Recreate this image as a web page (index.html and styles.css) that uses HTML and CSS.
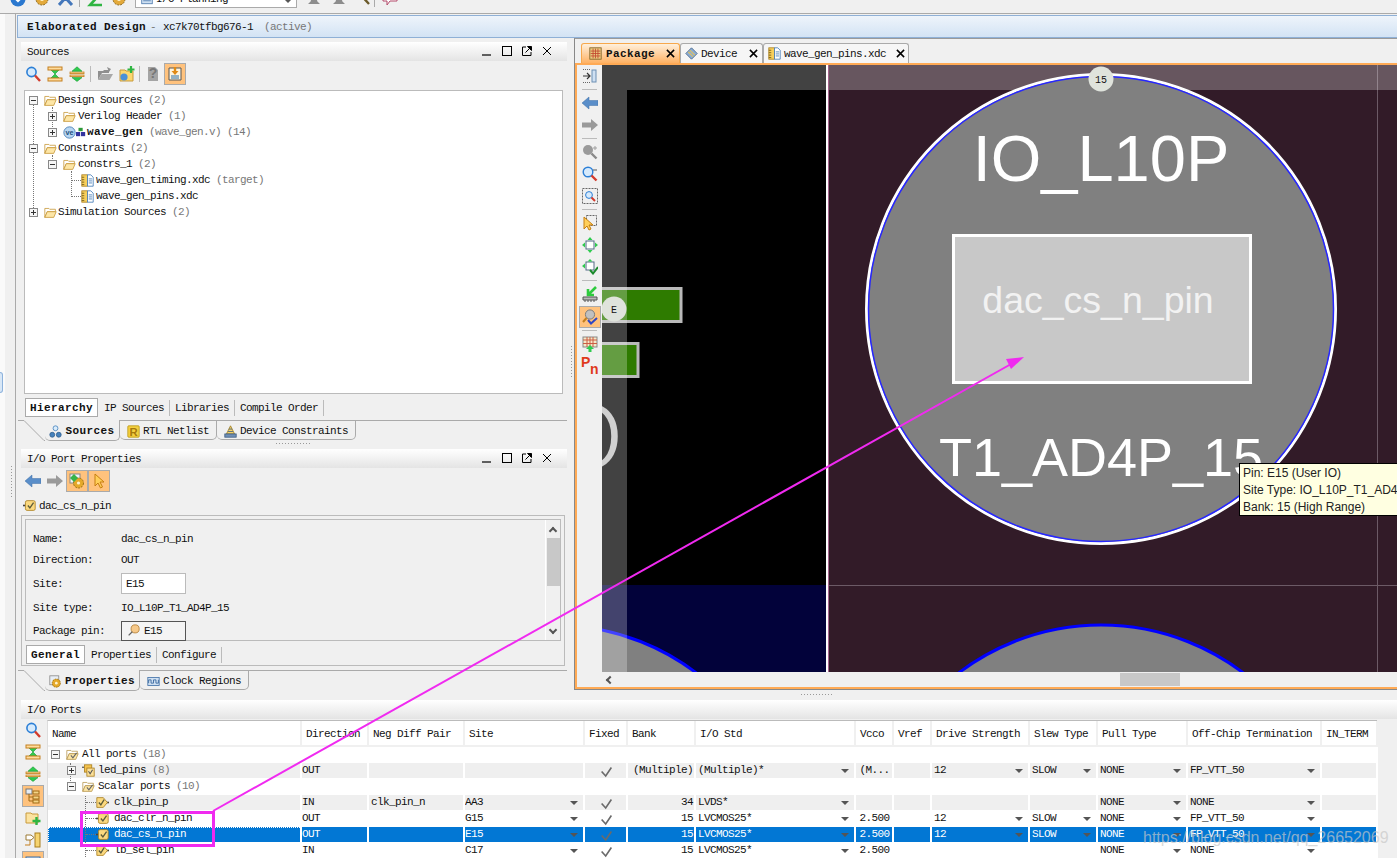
FILE: index.html
```html
<!DOCTYPE html>
<html lang="en">
<head>
    <meta charset="UTF-8">
    <title>Elaborated Design - I/O Planning</title>
    <link rel="stylesheet" href="styles.css">
</head>
<body>
<svg class="sprite" aria-hidden="true">
    <symbol id="i-search" viewBox="0 0 16 16"><circle cx="6.5" cy="6" r="4.6" fill="#d6eafc" stroke="#2c7fd6" stroke-width="1.6"/><path d="M10 9.5l5 5.5" stroke="#d23a2c" stroke-width="2.4"/></symbol>
    <symbol id="i-collapse" viewBox="0 0 16 16"><path d="M4 4h8L8 8zM4 12h8L8 8z" fill="#2fcb4f" stroke="#159a30" stroke-width=".6"/><rect x="1" y="1" width="14" height="3" fill="#ffdc9c" stroke="#c47f1e"/><rect x="1" y="12" width="14" height="3" fill="#ffdc9c" stroke="#c47f1e"/></symbol>
    <symbol id="i-expand" viewBox="0 0 16 16"><rect x="1" y="6" width="14" height="1.6" fill="#ffdc9c" stroke="#c47f1e" stroke-width=".8"/><rect x="1" y="9" width="14" height="1.6" fill="#ffdc9c" stroke="#c47f1e" stroke-width=".8"/><path d="M8 .8l5 4.400H3zM8 15.400l5-3.800H3z" fill="#2fcb4f" stroke="#159a30" stroke-width=".6"/></symbol>
    <symbol id="i-folder-gray" viewBox="0 0 16 16"><path d="M1 5h5l1-1h5v3H5L1 14z" fill="#8f8f8f"/><path d="M1 14l3.500-6H16l-3.500 6z" fill="#a8a8a8"/><path d="M10 1l4 2-2 3z" fill="#8f8f8f"/></symbol>
    <symbol id="i-folder-add" viewBox="0 0 16 16"><path d="M1 4h5l1 1h7v10H1z" fill="#fbd76f" stroke="#c89a3c"/><circle cx="5" cy="11" r="3.600" fill="#4a90d8"/><path d="M12 0v7M8.500 3.500h7" stroke="#2fb542" stroke-width="2.200"/></symbol>
    <symbol id="i-folder-plus" viewBox="0 0 16 16"><path d="M1 3h5l1 1h6v9H1z" fill="#fce3a0" stroke="#c89a3c"/><path d="M11.500 7v8M7.500 11h8" stroke="#2fb542" stroke-width="2.400"/></symbol>
    <symbol id="i-scope" viewBox="0 0 16 16"><path d="M2 2h12v12H2z" fill="#fff4dc" stroke="#565656"/><path d="M4 10h8M4 12h8" stroke="#2a6fa8"/><path d="M8 1v6" stroke="#e08a14" stroke-width="2.400"/><path d="M4.500 5L8 9l3.500-4z" fill="#e08a14"/></symbol>
    <symbol id="i-folder" viewBox="0 0 16 16"><path d="M1 3h5l1 1h7v3H4L1 14z" fill="#fff" stroke="#c89a3c"/><path d="M1 14l3-7h11l-3 7z" fill="#fde6a6" stroke="#c89a3c"/></symbol>
    <symbol id="i-folder-check" viewBox="0 0 16 16"><path d="M1 3h5l1 1h7v3H4L1 14z" fill="#fff" stroke="#b99a55"/><path d="M1 14l3-7h11l-3 7z" fill="#fde6a6" stroke="#b99a55"/><path d="M6 9l2.500 3L13 6" fill="none" stroke="#666" stroke-width="1.400"/></symbol>
    <symbol id="i-bus" viewBox="0 0 16 16"><path d="M0 4h3" stroke="#555" stroke-width="1.500"/><rect x="3" y="1" width="9" height="9" fill="#f5c34e" stroke="#a97e1e"/><rect x="6" y="5" width="9" height="10" fill="#fbe09a" stroke="#a97e1e"/><path d="M8 9l2 3 3-5" fill="none" stroke="#555" stroke-width="1.300"/></symbol>
    <symbol id="i-chip" viewBox="0 0 12 12"><rect x="3" y="1" width="5" height="4" fill="#2e9a3a"/><rect x="0" y="6" width="5" height="5" fill="#33339f"/><rect x="6" y="6" width="5" height="5" fill="#33339f"/></symbol>
    <symbol id="i-file" viewBox="0 0 16 16"><rect x="1" y="1" width="7" height="14" fill="#f7cf5c" stroke="#a97e1e"/><path d="M1 4h3M1 7h3M1 10h3M1 13h3" stroke="#6d5413"/><path d="M8 1h4l3 3v11H8z" fill="#fff" stroke="#3f78b5"/><path d="M9.500 6h4M9.500 8.500h4M9.500 11h4" stroke="#3f78b5"/></symbol>
    <symbol id="i-back" viewBox="0 0 16 16"><path d="M0 8l7-6v3.500h9v5H7V14z" fill="#5a8ec9" stroke="#3f6fa6" stroke-width=".5"/></symbol>
    <symbol id="i-forward" viewBox="0 0 16 16"><path d="M16 8L9 2v3.500H0v5h9V14z" fill="#9a9a9a"/></symbol>
    <symbol id="i-gear-tile" viewBox="0 0 16 16"><rect x="1" y="1" width="10" height="9" fill="#eef4fb" stroke="#888"/><circle cx="9.500" cy="10" r="5" fill="#e5a92a" stroke="#9b6f10" stroke-dasharray="2 1"/><circle cx="9.500" cy="10" r="1.600" fill="#fff3cf"/><path d="M1 5l4-4 4 4-4 4z" fill="#37b34a"/></symbol>
    <symbol id="i-cursor" viewBox="0 0 16 16"><path d="M4 1v12l3-3 2.500 5 2-1-2.500-5h4z" fill="#ffcf5a" stroke="#c77e10"/></symbol>
    <symbol id="i-port" viewBox="0 0 16 16"><path d="M0 8h3" stroke="#444" stroke-width="2"/><rect x="3" y="2" width="12" height="12" rx="2" fill="#fbd97f" stroke="#a97e1e"/><path d="M6 8l2.500 3L13 4.500" fill="none" stroke="#5b5b3a" stroke-width="1.600"/></symbol>
    <symbol id="i-port-out" viewBox="0 0 16 16"><path d="M13 8h3" stroke="#444" stroke-width="2"/><path d="M1 2h8l5 6-5 6H1z" fill="#fbd97f" stroke="#a97e1e"/><path d="M3.500 8l2.500 3 4-6.500" fill="none" stroke="#5b5b3a" stroke-width="1.600"/></symbol>
    <symbol id="i-pin" viewBox="0 0 16 16"><circle cx="10" cy="6" r="5" fill="#f6c98a" stroke="#b07d34"/><path d="M6.500 9.500L2 14" stroke="#666" stroke-width="1.600"/></symbol>
    <symbol id="i-device-c" viewBox="0 0 16 16"><path d="M8 1l5 10H3z" fill="#f6d46b" stroke="#9b7a1c"/><rect x="1" y="11" width="14" height="4" fill="#6f8fb5" stroke="#3d5c82"/><path d="M5 8h6M6 5h4" stroke="#3d5c82"/></symbol>
    <symbol id="i-sources" viewBox="0 0 16 16"><circle cx="8" cy="4" r="3" fill="#d9ecfb" stroke="#4682bd"/><circle cx="4" cy="12" r="3" fill="#4682bd" stroke="#2c5d8d"/><circle cx="12" cy="12" r="3" fill="#4682bd" stroke="#2c5d8d"/></symbol>
    <symbol id="i-gear" viewBox="0 0 16 16"><rect x="1" y="1" width="11" height="11" fill="#e8eef5" stroke="#888"/><circle cx="9" cy="10" r="5" fill="#e5a92a" stroke="#9b6f10" stroke-dasharray="2 1"/><circle cx="9" cy="10" r="1.600" fill="#fff3cf"/></symbol>
    <symbol id="i-clock" viewBox="0 0 16 16"><rect x="1" y="3" width="14" height="10" fill="#cfe0f2" stroke="#3f6fa6"/><path d="M2 10V6h3v4h3V6h3v4h3V6" fill="none" stroke="#2d5f99"/></symbol>
    <symbol id="i-package" viewBox="0 0 16 16"><rect x="1" y="1" width="14" height="14" fill="#e9c97f" stroke="#7c5f24"/><path d="M2 5h12M2 8h12M2 11h12M5 2v12M8 2v12M11 2v12" stroke="#c2452d"/></symbol>
    <symbol id="i-device" viewBox="0 0 16 16"><path d="M1 8l7-7 7 7-7 7z" fill="#8eadd1" stroke="#3e5f89"/><path d="M4 6l6 6M6 4l6 6" stroke="#e9c455" stroke-width="1.300"/></symbol>
    <symbol id="i-dock" viewBox="0 0 16 16"><path d="M1 8h7M5 5l3 3-3 3" fill="none" stroke="#333" stroke-width="1.200"/><rect x="10" y="2" width="4" height="12" fill="#cfe0f2" stroke="#6d8fb3"/><path d="M1 1.500h8M1 14.500h8" stroke="#666" stroke-dasharray="1 1"/></symbol>
    <symbol id="i-zoom-in" viewBox="0 0 16 16"><circle cx="6" cy="6" r="5" fill="#9a9a9a"/><path d="M9.500 9.500l5 5" stroke="#8a8a8a" stroke-width="2.400"/><path d="M11 4h4M13 2v4" stroke="#a0a0a0"/></symbol>
    <symbol id="i-zoom-out" viewBox="0 0 16 16"><circle cx="6" cy="6" r="4.800" fill="#d6eafc" stroke="#2c7fd6" stroke-width="1.400"/><path d="M9.500 9.500l5 5" stroke="#d23a2c" stroke-width="2.400"/><path d="M11 4h4" stroke="#555"/></symbol>
    <symbol id="i-zoom-fit" viewBox="0 0 16 16"><rect x=".5" y=".5" width="15" height="15" fill="none" stroke="#666" stroke-dasharray="2 1"/><circle cx="7" cy="7" r="3.400" fill="#d6eafc" stroke="#2c7fd6"/><path d="M9.500 9.500l3.500 3.500" stroke="#d23a2c" stroke-width="2"/></symbol>
    <symbol id="i-select" viewBox="0 0 16 16"><rect x="4.500" y=".5" width="10" height="10" fill="none" stroke="#666" stroke-dasharray="2 1"/><path d="M2 2v12l3-3 2 4 2-1-2-4h4z" fill="#ffcf5a" stroke="#c77e10"/></symbol>
    <symbol id="i-autofit" viewBox="0 0 16 16"><rect x="4" y="4" width="8" height="8" fill="#fff" stroke="#536a85"/><path d="M8 0l2.500 3h-5zM8 16l2.500-3h-5zM0 8l3-2.500v5zM16 8l-3-2.500v5z" fill="#2fcb4f"/></symbol>
    <symbol id="i-autofit-check" viewBox="0 0 16 16"><rect x="4" y="3" width="8" height="8" fill="#fff" stroke="#536a85"/><path d="M8 0l2.500 2.500h-5zM0 7l3-2.500v5z" fill="#2fcb4f"/><path d="M8 11l3 3.500L16 8" fill="none" stroke="#1b8a2c" stroke-width="2"/></symbol>
    <symbol id="i-place" viewBox="0 0 16 16"><path d="M14 1L7 8M6 3v6h6" fill="none" stroke="#2ecb3e" stroke-width="2.600"/><path d="M1 11h14v3H1z" fill="#b9b9b9" stroke="#555"/><path d="M3 14v2M6 14v2M9 14v2M12 14v2" stroke="#555"/></symbol>
    <symbol id="i-pin-check" viewBox="0 0 16 16"><circle cx="8" cy="5.500" r="4.600" fill="#c0c0c0" stroke="#7d7d7d"/><path d="M4.500 9L1 13" stroke="#c47f1e" stroke-width="2"/><path d="M6 11l3 3.500L15 9" fill="none" stroke="#2f47c4" stroke-width="2"/></symbol>
    <symbol id="i-grid" viewBox="0 0 16 16"><rect x="1" y="1" width="14" height="10" fill="#f4e8c8" stroke="#888"/><path d="M1 4h14M1 7.500h14M5 1v10M8 1v10M11 1v10" stroke="#cc5d45"/><path d="M8 9l4 4h-2.500v3h-3v-3H4z" fill="#2fcb4f"/></symbol>
    <symbol id="i-hier" viewBox="0 0 16 16"><rect x="1" y="1" width="6" height="5" fill="#e6ecf3" stroke="#777"/><path d="M4 6v7h4M4 9h4" fill="none" stroke="#a06a14"/><rect x="8" y="3" width="6" height="3" fill="#f4d487" stroke="#a06a14"/><rect x="8" y="8" width="6" height="3" fill="#f4d487" stroke="#a06a14"/><rect x="8" y="12" width="6" height="3" fill="#f4d487" stroke="#a06a14"/></symbol>
    <symbol id="i-sched" viewBox="0 0 16 16"><rect x="10" y="1" width="5" height="14" fill="#f6d470" stroke="#a97e1e"/><path d="M0 13h5V3" fill="none" stroke="#c47f1e"/><path d="M1 3h5l3 2.500L6 8H1z" fill="#fff" stroke="#9c7a35"/></symbol>
    <symbol id="i-check" viewBox="0 0 16 16"><path d="M2 8l5 5.500L14 3" fill="none" stroke="#6a6a6a" stroke-width="2"/></symbol>
    <symbol id="i-min" viewBox="0 0 10 10"><path d="M0 9h9" stroke="#000" stroke-width="1.200"/></symbol>
    <symbol id="i-max" viewBox="0 0 10 10"><rect x=".5" y=".5" width="9" height="9" fill="none" stroke="#000"/></symbol>
    <symbol id="i-float" viewBox="0 0 10 10"><path d="M4 1H.5v8.500H9V6" fill="none" stroke="#000"/><path d="M3.500 6.500L9 1M5.500 .5h4v4z" stroke="#000"/></symbol>
    <symbol id="i-close" viewBox="0 0 10 10"><path d="M1 1l8 8M9 1l-8 8" stroke="#000"/></symbol>
    <symbol id="i-close-b" viewBox="0 0 10 10"><path d="M1 1l8 8M9 1l-8 8" stroke="#000" stroke-width="1.700"/></symbol>
    <symbol id="i-blue-ball" viewBox="0 0 16 16"><circle cx="8" cy="8" r="7.500" fill="#2b78cf"/><path d="M4 6l4 4 4-4" fill="none" stroke="#fff" stroke-width="2.200"/></symbol>
    <symbol id="i-gear-top" viewBox="0 0 16 16"><circle cx="8" cy="8" r="6" fill="#e3a93a" stroke="#8f6a1c" stroke-dasharray="2 1"/><circle cx="8" cy="8" r="2" fill="#fff2c8"/></symbol>
    <symbol id="i-tools" viewBox="0 0 16 16"><path d="M1 14L10 4M14 14L4 3" stroke="#4477bb" stroke-width="3"/><circle cx="12" cy="4" r="3" fill="#e3a93a"/></symbol>
    <symbol id="i-z" viewBox="0 0 16 16"><path d="M2 2h12L3 14h12" fill="none" stroke="#2fb542" stroke-width="2.600"/></symbol>
    <symbol id="i-pin-top" viewBox="0 0 16 16"><path d="M3 2h10l-2 8 3 3H2l3-3z" fill="#8d8d8d"/></symbol>
    <symbol id="i-hammer" viewBox="0 0 16 16"><path d="M3 2l10 11" stroke="#6b5a2a" stroke-width="2.400"/><path d="M1 5l5-4 3 2-5 4z" fill="#e6a52b"/></symbol>
    <symbol id="i-bubble" viewBox="0 0 16 16"><path d="M1 2h14v8H8l-3 4v-4H1z" fill="#fff" stroke="#b34a6a"/><circle cx="8" cy="6" r="2" fill="#d84040"/></symbol>
    <symbol id="i-doc" viewBox="0 0 16 16"><rect x="1" y="3" width="14" height="10" fill="#cfe0f2" stroke="#3f6fa6"/><path d="M3 6h10M3 9h10" stroke="#3f6fa6"/></symbol>
</svg>

<div class="app">
    <div class="top-toolbar">
        <svg class="top-icon"><use href="#i-blue-ball"/></svg>
        <svg class="top-icon"><use href="#i-gear-top"/></svg>
        <svg class="top-icon"><use href="#i-tools"/></svg>
        <span class="top-sep"></span>
        <svg class="top-icon"><use href="#i-z"/></svg>
        <svg class="top-icon"><use href="#i-gear-top"/></svg>
        <div class="layout-select">
            <svg class="top-icon-small"><use href="#i-doc"/></svg>
            <span>I/O Planning</span>
            <i class="caret"></i>
        </div>
        <svg class="top-icon gap-big"><use href="#i-pin-top"/></svg>
        <svg class="top-icon after-big"><use href="#i-pin-top"/></svg>
        <svg class="top-icon tight"><use href="#i-hammer"/></svg>
        <span class="top-sep"></span>
        <svg class="top-icon"><use href="#i-bubble"/></svg>
    </div>

    <div class="body-row">
        <div class="rail"><span class="rail-btn"></span><span class="rail-grip"></span></div>

        <div class="main">
            <div class="design-bar">
                <b class="bold">Elaborated Design</b>
                <span class="muted dash">-</span>
                <span>xc7k70tfbg676-1</span>
                <span class="muted active-tag">(active)</span>
            </div>

            <div class="panes">
                <div class="left-col">
                    <div class="panel-head">
                        <span>Sources</span>
                        <div class="win-btns">
                            <svg><use href="#i-min"/></svg><svg><use href="#i-max"/></svg><svg><use href="#i-float"/></svg><svg><use href="#i-close"/></svg>
                        </div>
                    </div>
                    <div class="toolbar sources-tools">
                        <span class="tool"><svg><use href="#i-search"/></svg></span>
                        <span class="tool"><svg><use href="#i-collapse"/></svg></span>
                        <span class="tool"><svg><use href="#i-expand"/></svg></span>
                        <span class="tool-sep"></span>
                        <span class="tool"><svg><use href="#i-folder-gray"/></svg></span>
                        <span class="tool"><svg><use href="#i-folder-add"/></svg></span>
                        <span class="tool-sep narrow"></span>
                        <span class="tool">
                            <svg viewBox="0 0 16 16"><path d="M3 1h7l3 3v11H3z" fill="#a4a4a4"/><text x="8" y="12" class="svg-glyph" fill="#777">?</text></svg>
                        </span>
                        <span class="tool on"><svg><use href="#i-scope"/></svg></span>
                    </div>

                    <div class="tree-box">
                        <span class="guide g-root"></span>
                        <span class="guide g-design"></span>
                        <span class="guide g-constr"></span>
                        <span class="guide g-files"></span>
                        <div class="t-row lv0"><i class="exp minus"></i><svg class="ico"><use href="#i-folder"/></svg><span>Design Sources</span><span class="muted">(2)</span></div>
                        <div class="t-row lv1"><i class="exp plus"></i><svg class="ico"><use href="#i-folder"/></svg><span>Verilog Header</span><span class="muted">(1)</span></div>
                        <div class="t-row lv1">
                            <i class="exp plus"></i>
                            <svg class="ico ve" viewBox="0 0 16 16"><circle cx="8" cy="8" r="7" fill="#b7d6f2" stroke="#3e78b2"/><text x="8" y="11" class="svg-glyph svg-small" fill="#23527f">ve</text></svg>
                            <svg class="ico-chip"><use href="#i-chip"/></svg>
                            <b class="bold">wave_gen</b><span class="muted">(wave_gen.v)</span><span class="muted">(14)</span>
                        </div>
                        <div class="t-row lv0"><i class="exp minus"></i><svg class="ico"><use href="#i-folder"/></svg><span>Constraints</span><span class="muted">(2)</span></div>
                        <div class="t-row lv1"><i class="exp minus"></i><svg class="ico"><use href="#i-folder"/></svg><span>constrs_1</span><span class="muted">(2)</span></div>
                        <div class="t-row lv2"><i class="leaf"></i><svg class="ico"><use href="#i-file"/></svg><span>wave_gen_timing.xdc</span><span class="muted">(target)</span></div>
                        <div class="t-row lv2"><i class="leaf"></i><svg class="ico"><use href="#i-file"/></svg><span>wave_gen_pins.xdc</span></div>
                        <div class="t-row lv0"><i class="exp plus"></i><svg class="ico"><use href="#i-folder"/></svg><span>Simulation Sources</span><span class="muted">(2)</span></div>
                    </div>

                    <div class="view-tabs hierarchy-tabs">
                        <span class="view-tab on">Hierarchy</span>
                        <span class="view-tab">IP Sources</span>
                        <span class="view-tab">Libraries</span>
                        <span class="view-tab">Compile Order</span>
                    </div>
                    <div class="dock-tabs">
                        <svg class="notch" viewBox="0 0 27 21"><path d="M0 .5h6L26 20.500h1" fill="none" stroke="#aaa"/></svg>
                        <span class="dock-tab on sources-tab"><svg><use href="#i-sources"/></svg><b class="bold">Sources</b></span>
                        <span class="dock-tab rtl-tab">
                            <svg viewBox="0 0 16 16"><rect x="1" y="1" width="14" height="14" rx="1" fill="#f4d03f" stroke="#b99716"/><text x="8" y="13" class="svg-glyph" fill="#a6790d">R</text></svg>
                            RTL Netlist
                        </span>
                        <span class="dock-tab constr-tab"><svg><use href="#i-device-c"/></svg>Device Constraints</span>
                        <span class="dock-rest"></span>
                    </div>
                    <div class="split-grip"></div>

                    <div class="panel-head">
                        <span>I/O Port Properties</span>
                        <div class="win-btns">
                            <svg><use href="#i-min"/></svg><svg><use href="#i-max"/></svg><svg><use href="#i-float"/></svg><svg><use href="#i-close"/></svg>
                        </div>
                    </div>
                    <div class="toolbar props-tools">
                        <span class="tool"><svg><use href="#i-back"/></svg></span>
                        <span class="tool"><svg><use href="#i-forward"/></svg></span>
                        <span class="tool on"><svg><use href="#i-gear-tile"/></svg></span>
                        <span class="tool on"><svg><use href="#i-cursor"/></svg></span>
                    </div>
                    <div class="port-title"><svg><use href="#i-port"/></svg><span>dac_cs_n_pin</span></div>

                    <div class="prop-outer">
                        <div class="prop-inner">
                            <div class="prop-grid">
                                <span>Name:</span><span>dac_cs_n_pin</span>
                                <span>Direction:</span><span>OUT</span>
                                <span>Site:</span><span class="prop-input">E15</span>
                                <span>Site type:</span><span>IO_L10P_T1_AD4P_15</span>
                                <span>Package pin:</span><span class="prop-button"><svg><use href="#i-pin"/></svg>E15</span>
                            </div>
                            <div class="vscroll">
                                <i class="chev up"></i>
                                <span class="vthumb"></span>
                                <i class="chev down"></i>
                            </div>
                        </div>
                        <div class="view-tabs general-tabs">
                            <span class="view-tab on">General</span>
                            <span class="view-tab">Properties</span>
                            <span class="view-tab">Configure</span>
                        </div>
                    </div>
                    <div class="dock-tabs bottom-dock">
                        <svg class="notch" viewBox="0 0 27 21"><path d="M0 .5h6L26 20.500h1" fill="none" stroke="#aaa"/></svg>
                        <span class="dock-tab on props-tab"><svg><use href="#i-gear"/></svg><b class="bold">Properties</b></span>
                        <span class="dock-tab clock-tab"><svg><use href="#i-clock"/></svg>Clock Regions</span>
                        <span class="dock-rest"></span>
                    </div>
                </div>

                <div class="splitter"><span class="splitter-dots"></span></div>

                <div class="right-col">
                    <div class="editor-tabs">
                        <span class="ed-tab on package-tab"><svg class="ed-icon"><use href="#i-package"/></svg><b class="bold">Package</b><svg class="ed-close"><use href="#i-close-b"/></svg></span>
                        <span class="ed-tab device-tab"><svg class="ed-icon"><use href="#i-device"/></svg><span>Device</span><svg class="ed-close"><use href="#i-close-b"/></svg></span>
                        <span class="ed-tab pins-tab"><svg class="ed-icon"><use href="#i-file"/></svg><span>wave_gen_pins.xdc</span><svg class="ed-close"><use href="#i-close-b"/></svg></span>
                    </div>
                    <div class="editor-frame">
                        <div class="strip">
                            <span class="strip-btn"><svg><use href="#i-dock"/></svg></span>
                            <span class="strip-sep"></span>
                            <span class="strip-btn"><svg><use href="#i-back"/></svg></span>
                            <span class="strip-btn"><svg><use href="#i-forward"/></svg></span>
                            <span class="strip-sep"></span>
                            <span class="strip-btn"><svg><use href="#i-zoom-in"/></svg></span>
                            <span class="strip-btn"><svg><use href="#i-zoom-out"/></svg></span>
                            <span class="strip-btn"><svg><use href="#i-zoom-fit"/></svg></span>
                            <span class="strip-sep"></span>
                            <span class="strip-btn"><svg><use href="#i-select"/></svg></span>
                            <span class="strip-btn"><svg><use href="#i-autofit"/></svg></span>
                            <span class="strip-btn"><svg><use href="#i-autofit-check"/></svg></span>
                            <span class="strip-sep"></span>
                            <span class="strip-btn"><svg><use href="#i-place"/></svg></span>
                            <span class="strip-btn on"><svg><use href="#i-pin-check"/></svg></span>
                            <span class="strip-sep"></span>
                            <span class="strip-btn"><svg><use href="#i-grid"/></svg></span>
                            <span class="strip-btn pn-btn">
                                <svg viewBox="0 0 20 22"><text x="1" y="12" class="svg-glyph svg-bold" fill="#df3a1c">P</text><text x="10" y="19" class="svg-glyph svg-bold" fill="#df3a1c">n</text></svg>
                            </span>
                        </div>
                        <div class="canvas-col">
                            <svg class="canvas" viewBox="602 65 795 607">
                                <rect x="602" y="65" width="226" height="607" fill="#000"/>
                                <rect x="602" y="585" width="226" height="87" fill="#02023a"/>
                                <rect x="828" y="65" width="569" height="607" fill="#321b28"/>
                                <path d="M828 585.500h569M1377.500 65v607" stroke="#6c5a66" fill="none"/>
                                <text x="624" y="471" class="pkg-o">O</text>
                                <rect x="596" y="288.500" width="85" height="33" class="pin-rect"/>
                                <rect x="596" y="343.500" width="42" height="33" class="pin-rect"/>
                                <circle cx="554" cy="860" r="235" class="pad-far"/>
                                <circle cx="1101" cy="860" r="235" class="pad-far"/>
                                <rect x="602" y="90" width="25" height="582" class="band"/>
                                <rect x="602" y="65" width="795" height="25" class="band"/>
                                <rect x="826" y="65" width="2" height="607" fill="#fff"/>
                                <rect x="828" y="65" width="1" height="607" fill="#a4648c"/>
                                <circle cx="1101" cy="309" r="234.500" class="pad-main"/>
                                <circle cx="1101" cy="309" r="232.500" class="pad-ring"/>
                                <text x="1101" y="181" class="pad-text big">IO_L10P</text>
                                <rect x="953.500" y="235.500" width="297" height="147" class="pad-box"/>
                                <text x="1098" y="313" class="pad-net">dac_cs_n_pin</text>
                                <text x="1101" y="476" class="pad-text mid">T1_AD4P_15</text>
                                <circle cx="1101" cy="79" r="12.500" class="badge"/>
                                <text x="1101" y="83" class="badge-text">15</text>
                                <circle cx="614" cy="309" r="12.500" class="badge"/>
                                <text x="614" y="313" class="badge-text">E</text>
                            </svg>
                            <div class="hscroll"><i class="chev left"></i><span class="hthumb"></span></div>
                        </div>
                    </div>
                </div>
            </div>

            <div class="grip"><span class="grip-dots"></span></div>

            <div class="io-ports">
                <div class="panel-head no-nudge">
                    <span>I/O Ports</span>
                </div>
                <div class="ports-body">
                    <div class="ports-tools">
                        <span class="tool"><svg><use href="#i-search"/></svg></span>
                        <span class="tool"><svg><use href="#i-collapse"/></svg></span>
                        <span class="tool"><svg><use href="#i-expand"/></svg></span>
                        <span class="tool on"><svg><use href="#i-hier"/></svg></span>
                        <span class="tool"><svg><use href="#i-folder-plus"/></svg></span>
                        <span class="tool"><svg><use href="#i-sched"/></svg></span>
                        <span class="tool on"><svg><use href="#i-doc"/></svg></span>
                    </div>
                    <div class="ports-table-wrap">
                        <span class="guide g-p1"></span>
                        <span class="guide g-p2"></span>
                        <table class="ports">
                            <colgroup>
                                <col class="c-name"><col class="c-dir"><col class="c-neg"><col class="c-site"><col class="c-fixed"><col class="c-bank"><col class="c-std"><col class="c-vcco"><col class="c-vref"><col class="c-drive"><col class="c-slew"><col class="c-pull"><col class="c-off"><col class="c-term">
                            </colgroup>
                            <thead>
                                <tr>
                                    <th>Name</th><th>Direction</th><th>Neg Diff Pair</th><th>Site</th><th>Fixed</th><th>Bank</th><th>I/O Std</th><th>Vcco</th><th>Vref</th><th>Drive Strength</th><th>Slew Type</th><th>Pull Type</th><th>Off-Chip Termination</th><th>IN_TERM</th>
                                </tr>
                            </thead>
                            <tbody>
                                <tr>
                                    <td class="tree-cell"><div class="t-row p0"><i class="exp minus"></i><svg class="ico"><use href="#i-folder-check"/></svg><span>All ports</span><span class="muted">(18)</span></div></td>
                                    <td></td><td></td><td></td><td></td><td></td><td></td><td></td><td></td><td></td><td></td><td></td><td></td><td></td>
                                </tr>
                                <tr class="alt">
                                    <td class="tree-cell"><div class="t-row p1"><i class="exp plus"></i><svg class="ico"><use href="#i-bus"/></svg><span>led_pins</span><span class="muted">(8)</span></div></td>
                                    <td>OUT</td><td></td><td></td>
                                    <td class="ctr"><svg class="check"><use href="#i-check"/></svg></td>
                                    <td class="num">(Multiple)</td>
                                    <td><div class="dd">(Multiple)*<i class="caret"></i></div></td>
                                    <td class="ctr">(M...</td><td></td>
                                    <td><div class="dd">12<i class="caret"></i></div></td>
                                    <td><div class="dd">SLOW<i class="caret"></i></div></td>
                                    <td><div class="dd">NONE<i class="caret"></i></div></td>
                                    <td><div class="dd">FP_VTT_50<i class="caret"></i></div></td>
                                    <td></td>
                                </tr>
                                <tr>
                                    <td class="tree-cell"><div class="t-row p1"><i class="exp minus"></i><svg class="ico"><use href="#i-folder-check"/></svg><span>Scalar ports</span><span class="muted">(10)</span></div></td>
                                    <td></td><td></td><td></td><td></td><td></td><td></td><td></td><td></td><td></td><td></td><td></td><td></td><td></td>
                                </tr>
                                <tr class="alt">
                                    <td class="tree-cell"><div class="t-row p2"><i class="leaf"></i><svg class="ico"><use href="#i-port-out"/></svg><span>clk_pin_p</span></div></td>
                                    <td>IN</td><td>clk_pin_n</td>
                                    <td><div class="dd">AA3<i class="caret"></i></div></td>
                                    <td class="ctr"><svg class="check"><use href="#i-check"/></svg></td>
                                    <td class="num">34</td>
                                    <td><div class="dd">LVDS*<i class="caret"></i></div></td>
                                    <td></td><td></td><td></td><td></td>
                                    <td><div class="dd">NONE<i class="caret"></i></div></td>
                                    <td><div class="dd">NONE<i class="caret"></i></div></td>
                                    <td></td>
                                </tr>
                                <tr>
                                    <td class="tree-cell"><div class="t-row p2"><i class="leaf"></i><svg class="ico"><use href="#i-port"/></svg><span>dac_clr_n_pin</span></div></td>
                                    <td>OUT</td><td></td>
                                    <td><div class="dd">G15<i class="caret"></i></div></td>
                                    <td class="ctr"><svg class="check"><use href="#i-check"/></svg></td>
                                    <td class="num">15</td>
                                    <td><div class="dd">LVCMOS25*<i class="caret"></i></div></td>
                                    <td class="ctr">2.500</td><td></td>
                                    <td><div class="dd">12<i class="caret"></i></div></td>
                                    <td><div class="dd">SLOW<i class="caret"></i></div></td>
                                    <td><div class="dd">NONE<i class="caret"></i></div></td>
                                    <td><div class="dd">FP_VTT_50<i class="caret"></i></div></td>
                                    <td></td>
                                </tr>
                                <tr class="sel">
                                    <td class="tree-cell"><div class="t-row p2"><i class="leaf"></i><svg class="ico"><use href="#i-port"/></svg><span>dac_cs_n_pin</span></div></td>
                                    <td>OUT</td><td></td>
                                    <td><div class="dd">E15<i class="caret"></i></div></td>
                                    <td class="ctr"><svg class="check"><use href="#i-check"/></svg></td>
                                    <td class="num">15</td>
                                    <td><div class="dd">LVCMOS25*<i class="caret"></i></div></td>
                                    <td class="ctr">2.500</td><td></td>
                                    <td><div class="dd">12<i class="caret"></i></div></td>
                                    <td><div class="dd">SLOW<i class="caret"></i></div></td>
                                    <td><div class="dd">NONE<i class="caret"></i></div></td>
                                    <td><div class="dd">FP_VTT_50<i class="caret"></i></div></td>
                                    <td></td>
                                </tr>
                                <tr>
                                    <td class="tree-cell"><div class="t-row p2"><i class="leaf"></i><svg class="ico"><use href="#i-port-out"/></svg><span>lb_sel_pin</span></div></td>
                                    <td>IN</td><td></td>
                                    <td><div class="dd">C17<i class="caret"></i></div></td>
                                    <td class="ctr"><svg class="check"><use href="#i-check"/></svg></td>
                                    <td class="num">15</td>
                                    <td><div class="dd">LVCMOS25*<i class="caret"></i></div></td>
                                    <td class="ctr">2.500</td><td></td><td></td><td></td>
                                    <td><div class="dd">NONE<i class="caret"></i></div></td>
                                    <td><div class="dd">NONE<i class="caret"></i></div></td>
                                    <td></td>
                                </tr>
                            </tbody>
                        </table>
                    </div>
                </div>
            </div>
        </div>
    </div>

    <!-- hand-drawn annotation and the pin tooltip sit over everything -->
    <svg class="annotation" viewBox="0 0 1397 858">
        <rect x="81.500" y="812.500" width="132" height="33" class="mark-box"/>
        <line x1="213" y1="811" x2="1012" y2="363.500" class="mark-line"/>
        <path d="M1024 357l-18 2 5 10z" class="mark-head"/>
    </svg>
    <div class="tooltip">
        <div>Pin: E15 (User IO)</div>
        <div>Site Type: IO_L10P_T1_AD4P_15</div>
        <div>Bank: 15 (High Range)</div>
    </div>
    <div class="watermark">https://blog.csdn.net/qq_26652069</div>
</div>
</body>
</html>
```

FILE: styles.css
```css
* {
    box-sizing: border-box;
}
html, body {
    margin: 0;
    padding: 0;
    background-color: #f0f0f0;
}
.sprite {
    position: absolute;
    width: 0;
    height: 0;
}
.svg-glyph {
    font-family: "Liberation Sans", sans-serif;
    font-size: 14px;
    font-weight: bold;
    text-anchor: middle;
    letter-spacing: 0;
}
.svg-small {
    font-size: 9px;
}
.svg-bold {
    font-size: 14px;
    text-anchor: start;
}
.app {
    position: relative;
    width: 1397px;
    height: 858px;
    overflow: hidden;
    font-family: "Liberation Mono", monospace;
    font-size: 11px;
    letter-spacing: -0.6px;
    color: #111;
    background-color: #f0f0f0;
}
.bold {
    font-weight: bold;
    letter-spacing: 0.4px;
}
.muted {
    color: #777;
}

/* top toolbar, cut off by the screenshot */
.top-toolbar {
    display: flex;
    align-items: flex-end;
    height: 14px;
    padding: 0 0 6px 10px;
    border-bottom: 1px solid #aaa;
}
.top-icon {
    flex: none;
    width: 16px;
    height: 16px;
    margin-right: 8px;
}
.top-icon.gap-big {
    margin-left: 9px;
    margin-right: 9px;
}
.top-icon.after-big {
    margin-right: 9px;
}
.top-icon.tight {
    margin-right: 5px;
}
.top-sep {
    flex: none;
    width: 1px;
    height: 12px;
    margin: 0 7px 0 -3px;
    background-color: #aaa;
}
.layout-select {
    flex: none;
    display: flex;
    align-items: flex-end;
    justify-content: space-between;
    width: 162px;
    height: 12px;
    margin: 0 0 -1px 0;
    padding: 0 4px 4px 5px;
    border: 1px solid #aaa;
    background-color: #fff;
    line-height: 8px;
}
.top-icon-small {
    flex: none;
    width: 12px;
    height: 12px;
    margin-bottom: -3px;
}
.layout-select span {
    flex: 1;
    margin-left: 3px;
}
.caret {
    flex: none;
    width: 0;
    height: 0;
    border-left: 4px solid transparent;
    border-right: 4px solid transparent;
    border-top: 4px solid #555;
}

/* layout */
.body-row {
    display: flex;
    height: 844px;
}
.rail {
    flex: none;
    width: 16px;
    padding-top: 358px;
    border-right: 1px solid #aaa;
    background: linear-gradient(to right, #fafafa 5px, #f0f0f0 5px);
}
.rail-btn {
    display: block;
    width: 3px;
    height: 21px;
    border: 1px solid #8db2dc;
    border-left: 0;
    border-radius: 0 3px 3px 0;
    background-color: #d8e7f6;
}
.rail-grip {
    display: block;
    width: 3px;
    height: 34px;
    margin: 72px 0 0 10px;
    background: radial-gradient(circle, #999 1px, transparent 1px) 0 0 / 3px 3px repeat-y;
}
.main {
    flex: none;
    width: 1381px;
    padding: 1px 0 0 1px;
}
.design-bar {
    display: flex;
    align-items: center;
    height: 23px;
    padding: 1px 0 0 9px;
    border: 1px solid #8fb0d6;
    border-right: 0;
    background: linear-gradient(to bottom, #eef4fb, #d3e3f4);
}
.dash {
    margin: 0 7px 0 4px;
}
.active-tag {
    margin-left: 11px;
}
.panes {
    display: flex;
    height: 654px;
}
.left-col {
    flex: none;
    width: 546px;
    margin-left: 4px;
    padding-top: 4px;
}
.splitter {
    flex: none;
    width: 7px;
    padding: 307px 0 0 3px;
}
.splitter-dots {
    display: block;
    width: 3px;
    height: 34px;
    background: radial-gradient(circle, #999 1px, transparent 1px) 0 0 / 3px 3px repeat-y;
}
.right-col {
    flex: none;
    align-self: flex-start;
    width: 823px;
    height: 652px;
    padding-top: 2px;
    border-left: 1px solid #888;
    border-top: 1px solid #999;
    border-bottom: 1px solid #888;
}

/* panels */
.panel-head {
    display: flex;
    align-items: center;
    justify-content: space-between;
    height: 19px;
    padding: 1px 0 0 6px;
    background: linear-gradient(to bottom, #fff, #e4e4e4);
}
.panel-head.no-nudge {
    padding-top: 0;
}
.win-btns {
    display: flex;
    align-items: center;
    gap: 10px;
    padding: 0 15px 2px 0;
}
.win-btns svg {
    width: 10px;
    height: 10px;
}
.toolbar {
    display: flex;
    align-items: center;
    padding-left: 1px;
}
.sources-tools {
    height: 24px;
    margin-top: 1px;
}
.props-tools {
    height: 24px;
    margin-top: 1px;
}
.tool {
    flex: none;
    display: flex;
    align-items: center;
    justify-content: center;
    width: 22px;
    height: 22px;
}
.tool svg {
    width: 16px;
    height: 16px;
}
.tool.on {
    border: 1px solid #aaa;
    background-color: #ffc27d;
}
.tool-sep {
    flex: none;
    width: 1px;
    height: 16px;
    margin: 0 3px 0 2px;
    background-color: #bbb;
}
.tool-sep.narrow {
    margin: 0 2px 0 1px;
}

/* source tree */
.tree-box {
    position: relative;
    width: 539px;
    height: 304px;
    margin: 4px 0 0 3px;
    padding-top: 1px;
    border: 1px solid #bbb;
    background-color: #fff;
}
.t-row {
    display: flex;
    align-items: center;
    height: 16px;
    white-space: nowrap;
}
.t-row span,
.t-row b {
    margin-right: 6px;
}
.lv0 {
    padding-left: 4px;
}
.lv1 {
    padding-left: 23px;
}
.lv2 {
    padding-left: 46px;
}
.exp {
    position: relative;
    flex: none;
    width: 9px;
    height: 9px;
    margin-right: 6px;
    border: 1px solid #888;
    background-color: #f6f6f6;
}
.exp::before {
    content: "";
    position: absolute;
    left: 1px;
    top: 3px;
    width: 5px;
    height: 1px;
    background-color: #333;
}
.exp.plus::after {
    content: "";
    position: absolute;
    left: 3px;
    top: 1px;
    width: 1px;
    height: 5px;
    background-color: #333;
}
.leaf {
    flex: none;
    width: 10px;
    height: 1px;
    border-top: 1px dotted #777;
}
.ico {
    flex: none;
    width: 13px;
    height: 13px;
    margin-right: 2px;
}
.lv0 .ico {
    margin-right: 1px;
}
.ico.ve {
    margin-right: 0;
}
.ico-chip {
    flex: none;
    width: 10px;
    height: 10px;
    margin-right: 1px;
}
.guide {
    position: absolute;
    width: 1px;
    border-left: 1px dotted #777;
}
.g-root {
    left: 8px;
    top: 14px;
    height: 105px;
}
.g-design {
    left: 27px;
    top: 16px;
    height: 26px;
}
.g-constr {
    left: 27px;
    top: 64px;
    height: 8px;
}
.g-files {
    left: 46px;
    top: 80px;
    height: 26px;
}

/* small tab rows */
.view-tabs {
    display: flex;
    align-items: center;
    height: 20px;
    padding-top: 1px;
}
.hierarchy-tabs {
    margin: 3px 0 0 4px;
}
.view-tab {
    display: flex;
    align-items: center;
    height: 16px;
    padding: 0 5px;
    border-right: 1px solid #bbb;
}
.view-tab.on {
    height: 19px;
    padding: 0 4px;
    margin-right: 1px;
    border: 1px solid #aaa;
    background-color: #fff;
    font-weight: bold;
    letter-spacing: 0.4px;
}
.dock-tabs {
    display: flex;
    align-items: flex-start;
    height: 21px;
    margin: 3px 0 0 -3px;
}
.notch {
    flex: none;
    width: 27px;
    height: 21px;
}
.dock-tab {
    flex: none;
    display: flex;
    align-items: center;
    justify-content: center;
    gap: 3px;
    height: 20px;
    padding-top: 2px;
    border: 1px solid #aaa;
    border-left: 0;
    border-radius: 0 0 5px 5px;
}
.dock-tab svg {
    width: 13px;
    height: 13px;
}
.dock-tab.on {
    height: 21px;
    border-top: 0;
}
.dock-rest {
    flex: 1;
    height: 1px;
    background-color: #aaa;
}
.sources-tab {
    width: 75px;
}
.rtl-tab {
    width: 97px;
}
.constr-tab {
    width: 139px;
}
.props-tab {
    width: 95px;
}
.clock-tab {
    width: 109px;
}
.bottom-dock {
    margin-top: 4px;
}
.split-grip {
    width: 35px;
    height: 8px;
    margin-left: 254px;
    background: radial-gradient(circle, #999 1px, transparent 1px) 0 1px / 3px 3px repeat-x;
}

/* properties */
.port-title {
    display: flex;
    align-items: center;
    gap: 3px;
    height: 22px;
    padding: 3px 0 0 2px;
}
.port-title svg {
    width: 13px;
    height: 13px;
}
.prop-outer {
    width: 544px;
    height: 151px;
    padding: 3px 3px 0;
    border: 1px solid #bbb;
}
.prop-inner {
    display: flex;
    justify-content: space-between;
    height: 122px;
    border: 1px solid #bbb;
}
.prop-grid {
    display: grid;
    grid-template-columns: 88px 65px;
    grid-template-rows: 21px 21px 27px 21px 25px;
    align-items: center;
    align-content: start;
    padding: 8px 0 0 7px;
}
.prop-grid span {
    white-space: nowrap;
}
.prop-input {
    display: flex;
    align-items: center;
    height: 21px;
    padding-left: 4px;
    border: 1px solid #bbb;
    background-color: #fff;
}
.prop-button {
    display: flex;
    align-items: center;
    gap: 4px;
    height: 20px;
    padding-left: 5px;
    border: 1px solid #555;
    background-color: #f4f4f4;
}
.prop-button svg {
    width: 13px;
    height: 13px;
}
.vscroll {
    display: flex;
    flex-direction: column;
    align-items: center;
    justify-content: space-between;
    width: 15px;
    padding: 5px 0;
    border-left: 1px solid #fff;
}
.vthumb {
    width: 13px;
    height: 48px;
    margin-top: -38px;
    background-color: #c8c8c8;
}
.chev {
    display: block;
    width: 6px;
    height: 6px;
    border-left: 2px solid #555;
    border-top: 2px solid #555;
}
.chev.up {
    transform: rotate(45deg);
    margin-top: 3px;
}
.chev.down {
    transform: rotate(225deg);
    margin-bottom: 2px;
}
.chev.left {
    transform: rotate(-45deg);
}
.general-tabs {
    margin: 3px 0 0 1px;
}

/* package view */
.editor-tabs {
    display: flex;
    align-items: flex-end;
    height: 22px;
    padding-left: 6px;
}
.ed-tab {
    flex: none;
    display: flex;
    align-items: center;
    height: 20px;
    padding: 0 4px;
    border: 1px solid #aaa;
    border-bottom: 0;
    border-radius: 3px 3px 0 0;
    background-color: #f6f6f6;
}
.ed-tab.on {
    padding-left: 7px;
    border-color: #f7a84c;
    background: linear-gradient(to bottom, #fff0dc, #ffb264);
}
.ed-icon {
    flex: none;
    width: 13px;
    height: 13px;
    margin-right: 3px;
}
.on .ed-icon {
    margin-right: 4px;
}
.ed-close {
    flex: none;
    width: 9px;
    height: 9px;
    margin-left: auto;
}
.package-tab {
    width: 99px;
}
.device-tab {
    width: 83px;
}
.pins-tab {
    width: 146px;
    padding-right: 3px;
}
.editor-frame {
    display: flex;
    height: 626px;
    border: 2px solid #ffaa55;
    border-right: 0;
}
.strip {
    flex: none;
    display: flex;
    flex-direction: column;
    align-items: center;
    width: 25px;
    background-color: #f0f0f0;
}
.strip-btn {
    flex: none;
    display: flex;
    align-items: center;
    justify-content: center;
    width: 22px;
    height: 22px;
}
.strip-btn svg {
    width: 16px;
    height: 16px;
}
.strip-btn.pn-btn svg {
    width: 20px;
    height: 22px;
}
.strip-btn.on {
    margin-top: 1px;
    border: 1px solid #aaa;
    background-color: #ffc27d;
}
.strip-sep {
    flex: none;
    width: 15px;
    height: 5px;
    background: linear-gradient(#f0f0f0 2px, #bbb 2px, #bbb 3px, #f0f0f0 3px);
}
.canvas-col {
    flex: 1;
    min-width: 0;
    display: flex;
    flex-direction: column;
}
.canvas {
    display: block;
    flex: none;
    width: 795px;
    height: 607px;
}
.band {
    fill: #fff;
    fill-opacity: 0.26;
}
.pin-rect {
    fill: #2e7b00;
    stroke: #b9b9b9;
    stroke-width: 3;
}
.pad-far {
    fill: #808080;
    stroke: #0000ff;
    stroke-width: 3;
}
.pad-main {
    fill: #808080;
    stroke: #fff;
    stroke-width: 3;
}
.pad-ring {
    fill: none;
    stroke: #2626ff;
    stroke-width: 1.5;
}
.pad-text {
    font-family: "Liberation Sans", sans-serif;
    fill: #fff;
    text-anchor: middle;
    letter-spacing: 0;
}
.pad-text.big {
    font-size: 65px;
}
.pad-text.mid {
    font-size: 54px;
}
.pad-box {
    fill: #c8c8c8;
    stroke: #fff;
    stroke-width: 3;
}
.pad-net {
    font-family: "Liberation Sans", sans-serif;
    font-size: 37.500px;
    fill: #f2f2f2;
    text-anchor: middle;
    letter-spacing: 0;
}
.pkg-o {
    font-family: "Liberation Sans", sans-serif;
    font-size: 100px;
    fill: #c0c0c0;
    stroke: #000;
    stroke-width: 3;
    paint-order: normal;
    text-anchor: end;
    letter-spacing: 0;
}
.badge {
    fill: #dfe3dc;
}
.badge-text {
    font-family: "Liberation Mono", monospace;
    font-size: 10px;
    fill: #111;
    text-anchor: middle;
    letter-spacing: 0;
}
.hscroll {
    display: flex;
    align-items: center;
    height: 15px;
    padding-left: 5px;
    background-color: #f0f0f0;
}
.hthumb {
    width: 60px;
    height: 13px;
    margin-left: 507px;
    background-color: #c8c8c8;
}

/* I/O ports */
.grip {
    height: 8px;
    padding: 1px 0 0 783px;
}
.grip-dots {
    display: block;
    width: 34px;
    height: 3px;
    background: radial-gradient(circle, #999 1px, transparent 1px) 0 0 / 3px 3px repeat-x;
}
.io-ports {
    margin-left: 4px;
}
.ports-body {
    display: flex;
    height: 140px;
    margin-top: 1px;
    background-color: #f0f0f0;
}
.ports-tools {
    flex: none;
    width: 26px;
    margin-top: -1px;
    padding-left: 1px;
}
.ports-table-wrap {
    position: relative;
    flex: none;
    width: 1330px;
    border-top: 1px solid #bbb;
    border-left: 1px solid #ddd;
    background-color: #fff;
}
.ports {
    width: 1330px;
    table-layout: fixed;
    border-collapse: separate;
    border-spacing: 0;
}
.c-name { width: 254px; }
.c-dir { width: 67px; }
.c-neg { width: 96px; }
.c-site { width: 120px; }
.c-fixed { width: 43px; }
.c-bank { width: 68px; }
.c-std { width: 160px; }
.c-vcco { width: 38px; }
.c-vref { width: 38px; }
.c-drive { width: 98px; }
.c-slew { width: 68px; }
.c-pull { width: 90px; }
.c-off { width: 134px; }
.c-term { width: 56px; }
.ports th {
    height: 26px;
    padding: 1px 0 0 4px;
    border-right: 2px solid #f0f0f0;
    border-bottom: 2px solid #f0f0f0;
    font-weight: normal;
    text-align: left;
    white-space: nowrap;
}
.ports td {
    height: 16px;
    padding: 0 1px 0 2px;
    border-right: 2px solid #fff;
    border-bottom: 1px solid #fff;
    line-height: 13px;
    white-space: nowrap;
    overflow: hidden;
}
.ports td:nth-child(2),
.ports td:nth-child(4) {
    padding-left: 0;
}
.ports .t-row {
    height: 15px;
}
.ports .alt td {
    background-color: #efefef;
}
.ports .sel td {
    background-color: #0277d4;
    color: #fff;
}
.ports .sel .muted {
    color: #fff;
}
.ports .sel .tree-cell {
    outline: 1px dotted #fff;
    outline-offset: -1px;
}
.ports .tree-cell {
    padding: 0;
}
.ports .ctr {
    text-align: center;
}
.ports .num {
    text-align: right;
}
.dd {
    display: flex;
    align-items: center;
    justify-content: space-between;
    padding-right: 4px;
}
.check {
    display: block;
    width: 13px;
    height: 13px;
    margin: 1px auto 0;
}
.sel .check path {
    stroke: #444;
}
.p0 {
    padding-left: 3px;
}
.p1 {
    padding-left: 19px;
}
.p2 {
    padding-left: 38px;
}
.p0 .ico,
.p1 .ico {
    margin-right: 3px;
}
.p2 .ico {
    margin-right: 5px;
}
.g-p1 {
    left: 22px;
    top: 42px;
    height: 22px;
}
.g-p2 {
    left: 37px;
    top: 75px;
    height: 65px;
}

/* annotation layer */
.annotation {
    position: absolute;
    left: 0;
    top: 0;
    width: 1397px;
    height: 858px;
    pointer-events: none;
}
.mark-box {
    fill: none;
    stroke: #f02af0;
    stroke-width: 3;
}
.mark-line {
    stroke: #f02af0;
    stroke-width: 2;
}
.mark-head {
    fill: #f02af0;
}
.tooltip {
    position: absolute;
    left: 1239px;
    top: 463px;
    width: 170px;
    height: 53px;
    padding: 1px 0 0 3px;
    border: 1px solid #000;
    background-color: #ffffe1;
    font-family: "Liberation Sans", sans-serif;
    font-size: 12px;
    line-height: 17px;
    letter-spacing: 0;
    white-space: nowrap;
    color: #222;
}
.watermark {
    position: absolute;
    left: 1143px;
    top: 829px;
    font-family: "Liberation Sans", sans-serif;
    font-size: 16px;
    letter-spacing: 0;
    color: rgba(200, 200, 200, 0.7);
    white-space: nowrap;
}
```
